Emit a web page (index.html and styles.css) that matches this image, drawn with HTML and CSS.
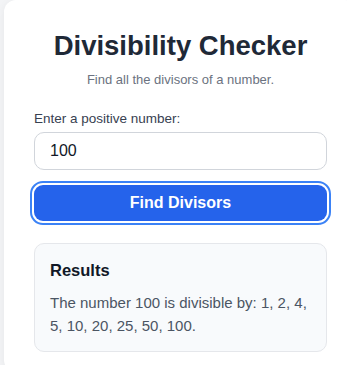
FILE: index.html
```html
<!DOCTYPE html>
<html lang="en">
<head>
  <meta charset="UTF-8">
  <meta name="viewport" content="width=device-width, initial-scale=1.0">
  <title>Divisibility Checker</title>
  <link rel="stylesheet" href="styles.css">
</head>
<body>
  <div class="card">
    <h1>Divisibility Checker</h1>
    <p class="subtitle">Find all the divisors of a number.</p>
    <label for="number">Enter a positive number:</label>
    <input type="text" id="number" value="100">
    <button class="check-btn">Find Divisors</button>
    <div class="results">
      <h3>Results</h3>
      <p>The number 100 is divisible by: 1, 2, 4, 5, 10, 20, 25, 50, 100.</p>
    </div>
  </div>
</body>
</html>
```

FILE: styles.css
```css
body {
  margin: 0;
  padding: 0 0 0 4px;
  font-family: 'Liberation Sans', Arial, sans-serif;
  background: #f3f4f6;
  color: #1f2937;
  overflow: hidden;
}
.card {
  width: 293px;
  background: white;
  border-radius: 12px;
  padding: 29px 30px 20px;
  box-shadow: 0 2px 8px rgba(0, 0, 0, 0.06);
}
h1 {
  margin: 0;
  text-align: center;
  font-size: 27.5px;
  line-height: 34px;
  color: #1f2937;
}
.subtitle {
  margin: 9px 0 24px;
  text-align: center;
  font-size: 13px;
  color: #6b7280;
}
label {
  display: block;
  font-size: 13.5px;
  color: #374151;
  margin-bottom: 6px;
}
input[type="text"] {
  display: block;
  width: 100%;
  box-sizing: border-box;
  height: 38px;
  padding: 0 15px;
  font-family: inherit;
  font-size: 16px;
  color: #111827;
  border: 1px solid #d1d5db;
  border-radius: 10px;
  margin-bottom: 15px;
}
.check-btn {
  display: block;
  width: 100%;
  height: 36px;
  font-family: inherit;
  font-size: 16px;
  font-weight: bold;
  color: white;
  background: #2563eb;
  border: none;
  border-radius: 9px;
  outline: 2px solid #3b82f6;
  outline-offset: 2px;
}
.results {
  margin-top: 22px;
  background: #f8fafc;
  border: 1px solid #e5e7eb;
  border-radius: 10px;
  padding: 17px 15px 14px;
}
.results h3 {
  margin: 0 0 11px;
  font-size: 16.5px;
  color: #111827;
}
.results p {
  margin: 0;
  font-size: 15px;
  line-height: 23px;
  color: #4b5563;
}
```
